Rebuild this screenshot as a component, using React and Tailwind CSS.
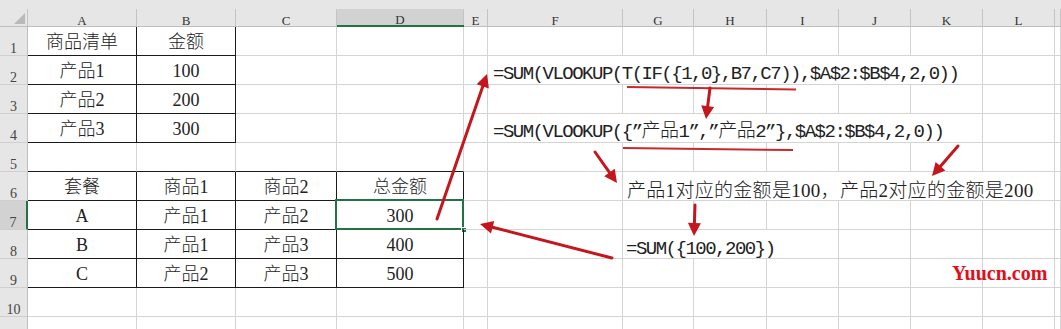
import React from 'react';

const COLS = ['A', 'B', 'C', 'D', 'E', 'F', 'G', 'H', 'I', 'J', 'K', 'L', ''];
const NROWS = 11;

const inT = (r, c) =>
  (r >= 1 && r <= 4 && c >= 0 && c <= 1) || (r >= 6 && r <= 9 && c >= 0 && c <= 3);

const tableText = {
  '1-0': '商品清单', '1-1': '金额',
  '2-0': '产品1', '2-1': '100',
  '3-0': '产品2', '3-1': '200',
  '4-0': '产品3', '4-1': '300',
  '6-0': '套餐', '6-1': '商品1', '6-2': '商品2', '6-3': '总金额',
  '7-0': 'A', '7-1': '产品1', '7-2': '产品2', '7-3': '300',
  '8-0': 'B', '8-1': '产品1', '8-2': '产品3', '8-3': '400',
  '9-0': 'C', '9-1': '产品2', '9-2': '产品3', '9-3': '500',
};

const mono = "font-['Liberation_Mono','Noto_Sans_CJK_SC',monospace] text-[19px] leading-[14px] tracking-[-1.5px] text-[#222]";

const spans = {
  '2-5': {
    n: 6,
    cls: 'col-span-6 pl-[5px] pb-[3px]',
    node: <span className={mono}>{'=SUM(VLOOKUP(T(IF({1,0},B7,C7)),$A$2:$B$4,2,0))'}</span>,
  },
  '4-5': {
    n: 6,
    cls: 'col-span-6 pl-[5px] pb-[3px]',
    node: (
      <span className={mono}>
        {'=SUM(VLOOKUP({”'}
        <span className="tracking-[-0.5px] font-light">产品</span>
        {'1”,”'}
        <span className="tracking-[-0.5px] font-light">产品</span>
        {'2”},$A$2:$B$4,2,0))'}
      </span>
    ),
  },
  '6-6': {
    n: 6,
    cls: 'col-span-6 pl-[4px] pb-[2px]',
    node: (
      <span className="font-['Liberation_Serif','Noto_Sans_CJK_SC',serif] font-light text-[19px] leading-[14px] tracking-[0.3px] text-[#222]">
        产品1对应的金额是100，产品2对应的金额是200
      </span>
    ),
  },
  '8-6': {
    n: 3,
    cls: 'col-span-3 pl-[3px] pb-[2px]',
    node: <span className={mono}>{'=SUM({100,200})'}</span>,
  },
};

function Arrow({ x1, y1, x2, y2 }) {
  const dx = x2 - x1;
  const dy = y2 - y1;
  const len = Math.hypot(dx, dy);
  const ux = dx / len;
  const uy = dy / len;
  const hl = 13;
  const hw = 6.5;
  const bx = x2 - ux * hl;
  const by = y2 - uy * hl;
  const px = -uy;
  const py = ux;
  const pts = `${x2},${y2} ${bx + px * hw},${by + py * hw} ${bx - px * hw},${by - py * hw}`;
  return (
    <g>
      <line x1={x1} y1={y1} x2={bx + ux * 2} y2={by + uy * 2} stroke="#c4161c" strokeWidth="3" strokeLinecap="round" />
      <polygon points={pts} fill="#c4161c" />
    </g>
  );
}

function HeaderRow() {
  return (
    <>
      <div className="relative flex flex-col bg-[#e6e6e6] border-b border-b-[#bfbfbf]">
        <div className="h-[9px]" />
        <div className="flex-1 border-r border-r-[#c4c4c4]" />
        <svg className="absolute left-[14px] top-[13px]" width="11" height="11" viewBox="0 0 11 11">
          <polygon points="11,0 11,11 0,11" fill="#b9b9b9" />
        </svg>
      </div>
      {COLS.map((l, c) =>
        c === 3 ? (
          <div key={c} className="flex flex-col bg-[#e6e6e6] border-b-2 border-b-[#217346]">
            <div className="h-[9px]" />
            <div className="flex-1 flex items-end justify-center bg-[#d2d2d2] border-r border-r-[#c4c4c4] font-['Liberation_Serif',serif] text-[13px] leading-[11px] text-[#333]">
              {l}
            </div>
          </div>
        ) : (
          <div key={c} className="flex flex-col bg-[#e6e6e6] border-b border-b-[#bfbfbf]">
            <div className="h-[9px]" />
            <div className="flex-1 flex items-end justify-center border-r border-r-[#c4c4c4] font-['Liberation_Serif',serif] text-[13px] leading-[11px] text-[#333]">
              {l}
            </div>
          </div>
        )
      )}
    </>
  );
}

function DataRow({ r }) {
  const cells = [];
  cells.push(
    <div
      key="h"
      className={
        r === 7
          ? "flex items-end justify-center bg-[#d2d2d2] border-r-2 border-r-[#217346] border-b border-b-[#cfcfcf] font-['Liberation_Serif',serif] text-[14px] leading-[12px] text-[#444]"
          : "flex items-end justify-center bg-[#e6e6e6] border-r border-r-[#bfbfbf] border-b border-b-[#cfcfcf] font-['Liberation_Serif',serif] text-[14px] leading-[12px] text-[#444]"
      }
    >
      {r <= 10 ? r : ''}
    </div>
  );
  let c = 0;
  while (c < COLS.length) {
    const key = `${r}-${c}`;
    const sp = spans[key];
    if (sp) {
      cells.push(
        <div key={key} className={`flex items-end whitespace-nowrap border-r border-b border-r-[#d4d4d4] border-b-[#d4d4d4] ${sp.cls}`}>
          {sp.node}
        </div>
      );
      c += sp.n;
      continue;
    }
    const rb = inT(r, c) || inT(r, c + 1);
    const bb = inT(r, c) || inT(r + 1, c);
    const cls = [
      'relative flex items-center justify-center border-r border-b whitespace-nowrap',
      rb ? 'border-r-[#1a1a1a]' : 'border-r-[#d4d4d4]',
      bb ? 'border-b-[#1a1a1a]' : 'border-b-[#d4d4d4]',
      "font-['Liberation_Serif','Noto_Sans_CJK_SC',serif] font-light text-[18px] leading-[20px] text-[#222]",
    ].join(' ');
    cells.push(
      <div key={key} className={cls}>
        {tableText[key] && <span className="pt-[1px]">{tableText[key]}</span>}
        {r === 7 && c === 3 && (
          <>
            <div className="absolute left-[-2px] top-[-2px] right-[-1px] bottom-[-1px] border-2 border-[#217346]" />
            <div className="absolute right-[-4px] bottom-[-4px] w-[6px] h-[6px] bg-[#217346] border border-white" />
          </>
        )}
      </div>
    );
    c += 1;
  }
  return <>{cells}</>;
}

export default function App() {
  const rows = [];
  for (let r = 1; r <= NROWS; r++) rows.push(<DataRow key={r} r={r} />);
  return (
    <div className="relative w-[1061px] h-[329px] overflow-hidden bg-white">
      <div className="grid grid-cols-[28px_109px_99px_101px_127px_24px_135px_71px_73px_72px_72px_72px_72px_6px] grid-rows-[27px_repeat(11,29px)]">
        <HeaderRow />
        {rows}
      </div>

      <svg className="absolute left-0 top-0 pointer-events-none" width="1061" height="329" viewBox="0 0 1061 329">
        <line x1="627" y1="87" x2="796" y2="89.5" stroke="#c62a2a" strokeWidth="2" />
        <line x1="623" y1="148" x2="793" y2="150" stroke="#c62a2a" strokeWidth="2" />
        <Arrow x1={437} y1={219} x2={487} y2={74} />
        <Arrow x1={710} y1={88} x2={706} y2={119} />
        <Arrow x1={595} y1={152} x2={617} y2={183} />
        <Arrow x1={958} y1={146} x2={932} y2={176} />
        <Arrow x1={695} y1={205} x2={694} y2={236} />
        <Arrow x1={612} y1={258} x2={480} y2={224} />
      </svg>

      <div className="absolute left-[952px] top-[262px] font-['Liberation_Serif',serif] font-bold text-[20px] leading-[22px] text-[#e0101b]">
        Yuucn.com
      </div>
    </div>
  );
}
